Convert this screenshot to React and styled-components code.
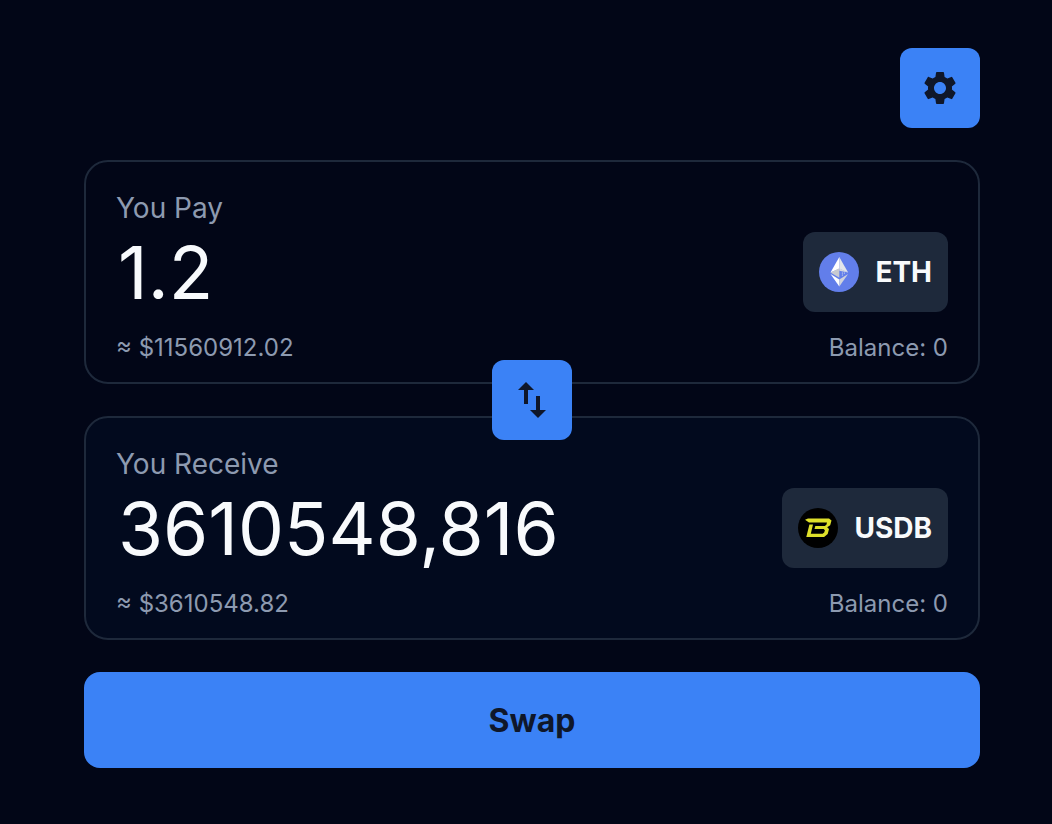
import React, { useState } from 'react';
import styled, { createGlobalStyle } from 'styled-components';
import { MdSettings, MdSwapVert } from 'react-icons/md';

const GlobalStyle = createGlobalStyle`
  *, *::before, *::after {
    box-sizing: border-box;
  }

  body {
    margin: 0;
    background-color: #020617;
    color: #f8fafc;
    font-family: Inter, 'Liberation Sans', sans-serif;
  }

  button, input {
    font-family: inherit;
    color: inherit;
  }
`;

const Page = styled.main`
  min-height: 100vh;
  padding: 48px 72px 56px 84px;
  display: flex;
  flex-direction: column;
  gap: 32px;
`;

const Toolbar = styled.header`
  display: flex;
  justify-content: flex-end;
`;

const IconButton = styled.button`
  width: 80px;
  height: 80px;
  padding: 0;
  border: none;
  border-radius: 12px;
  display: flex;
  align-items: center;
  justify-content: center;
  background-color: #3b82f6;
  color: #0f172a;
  cursor: pointer;
`;

const Panels = styled.div`
  position: relative;
  display: flex;
  flex-direction: column;
  gap: 32px;
`;

const FlipButton = styled(IconButton)`
  position: absolute;
  top: 50%;
  left: 50%;
  transform: translate(-50%, -50%);
`;

const Panel = styled.section`
  padding: 30px 30px 18px;
  border: 2px solid #1e293b;
  border-radius: 24px;
  background-color: ${props => (props.$filled ? '#020a1e' : 'transparent')};
`;

const Label = styled.label`
  display: block;
  margin-bottom: 8px;
  font-size: 28px;
  line-height: 32px;
  color: #8d9ab0;
`;

const AmountRow = styled.div`
  display: flex;
  align-items: center;
  gap: 16px;
  margin-bottom: 20px;
`;

const AmountInput = styled.input`
  flex: 1;
  min-width: 0;
  height: 80px;
  padding: 0 2px;
  border: none;
  outline: none;
  background: transparent;
  font-size: 73px;
`;

const TokenButton = styled.button`
  height: 80px;
  padding: 0 16px;
  border: none;
  border-radius: 12px;
  display: flex;
  align-items: center;
  gap: 16px;
  background-color: #1e293b;
  font-size: 28px;
  font-weight: 700;
  cursor: pointer;
`;

const Details = styled.div`
  display: flex;
  justify-content: space-between;
  font-size: 24px;
  line-height: 32px;
  color: #8d9ab0;
`;

const SwapButton = styled.button`
  height: 96px;
  border: none;
  border-radius: 16px;
  background-color: #3b82f6;
  color: #0f172a;
  font-size: 32px;
  font-weight: 700;
  cursor: pointer;
`;

const EthIcon = () => (
  <svg width="40" height="40" viewBox="0 0 40 40" aria-hidden="true">
    <circle cx="20" cy="20" r="20" fill="#627eea" />
    <path fill="#fff" d="M20.3 5v11.7l-8.8 3.8z" />
    <path fill="#e3e5ea" d="M20.3 5v11.7l8.8 3.8z" />
    <path fill="#c8cad0" d="M20.3 16.2v9.5l-8.8-5.2z" />
    <path fill="#d5d8e0" d="M20.3 16.2v2.6l8.8 1.7z" />
    <g fill="#e3e5ea">
      <circle cx="23.4" cy="21" r=".6" />
      <circle cx="25.4" cy="21" r=".6" />
      <circle cx="23.4" cy="23" r=".6" />
    </g>
    <path fill="#fff" d="M20.3 27.4v7.1l-8.8-12.4z" />
    <path fill="#d0d3dc" d="M20.3 27.4v7.1l8.8-12.4z" />
  </svg>
);

const UsdbIcon = () => (
  <svg width="40" height="40" viewBox="0 0 40 40" aria-hidden="true">
    <circle cx="20" cy="20" r="20" fill="#000" />
    <path
      fill="#dfe02a"
      d="M10 10.5H31l2.5 2-1.3 4.8-3 2 1.8 1.8-1.3 4.8-3.6 3H8.3l3.1-12.3H15l-2.2 9.2h11.8l1.6-1.2.7-2.4-1.2-1.2h-9.2l.8-3h9.5l1.6-1.2.6-2.4H11L7 11.8z"
    />
  </svg>
);

const TokenPanel = ({ id, label, amount, onChange, readOnly, fiat, symbol, icon, filled }) => (
  <Panel $filled={filled}>
    <Label htmlFor={id}>{label}</Label>
    <AmountRow>
      <AmountInput
        id={id}
        type="text"
        inputMode="decimal"
        value={amount}
        readOnly={readOnly}
        onChange={onChange}
      />
      <TokenButton type="button">
        {icon}
        {symbol}
      </TokenButton>
    </AmountRow>
    <Details>
      <span>≈ ${fiat}</span>
      <span>Balance: 0</span>
    </Details>
  </Panel>
);

const App = () => {
  const [amount, setAmount] = useState('1.2');

  return (
    <>
      <GlobalStyle />
      <Page>
        <Toolbar>
          <IconButton type="button" aria-label="Settings">
            <MdSettings size={40} />
          </IconButton>
        </Toolbar>

        <Panels>
          <TokenPanel
            id="pay"
            label="You Pay"
            amount={amount}
            onChange={e => setAmount(e.target.value)}
            fiat="11560912.02"
            symbol="ETH"
            icon={<EthIcon />}
          />
          <TokenPanel
            id="receive"
            label="You Receive"
            amount="3610548,816"
            readOnly
            fiat="3610548.82"
            symbol="USDB"
            icon={<UsdbIcon />}
            filled
          />
          <FlipButton type="button" aria-label="Switch tokens">
            <MdSwapVert size={48} />
          </FlipButton>
        </Panels>

        <SwapButton type="button">Swap</SwapButton>
      </Page>
    </>
  );
};

export default App;
